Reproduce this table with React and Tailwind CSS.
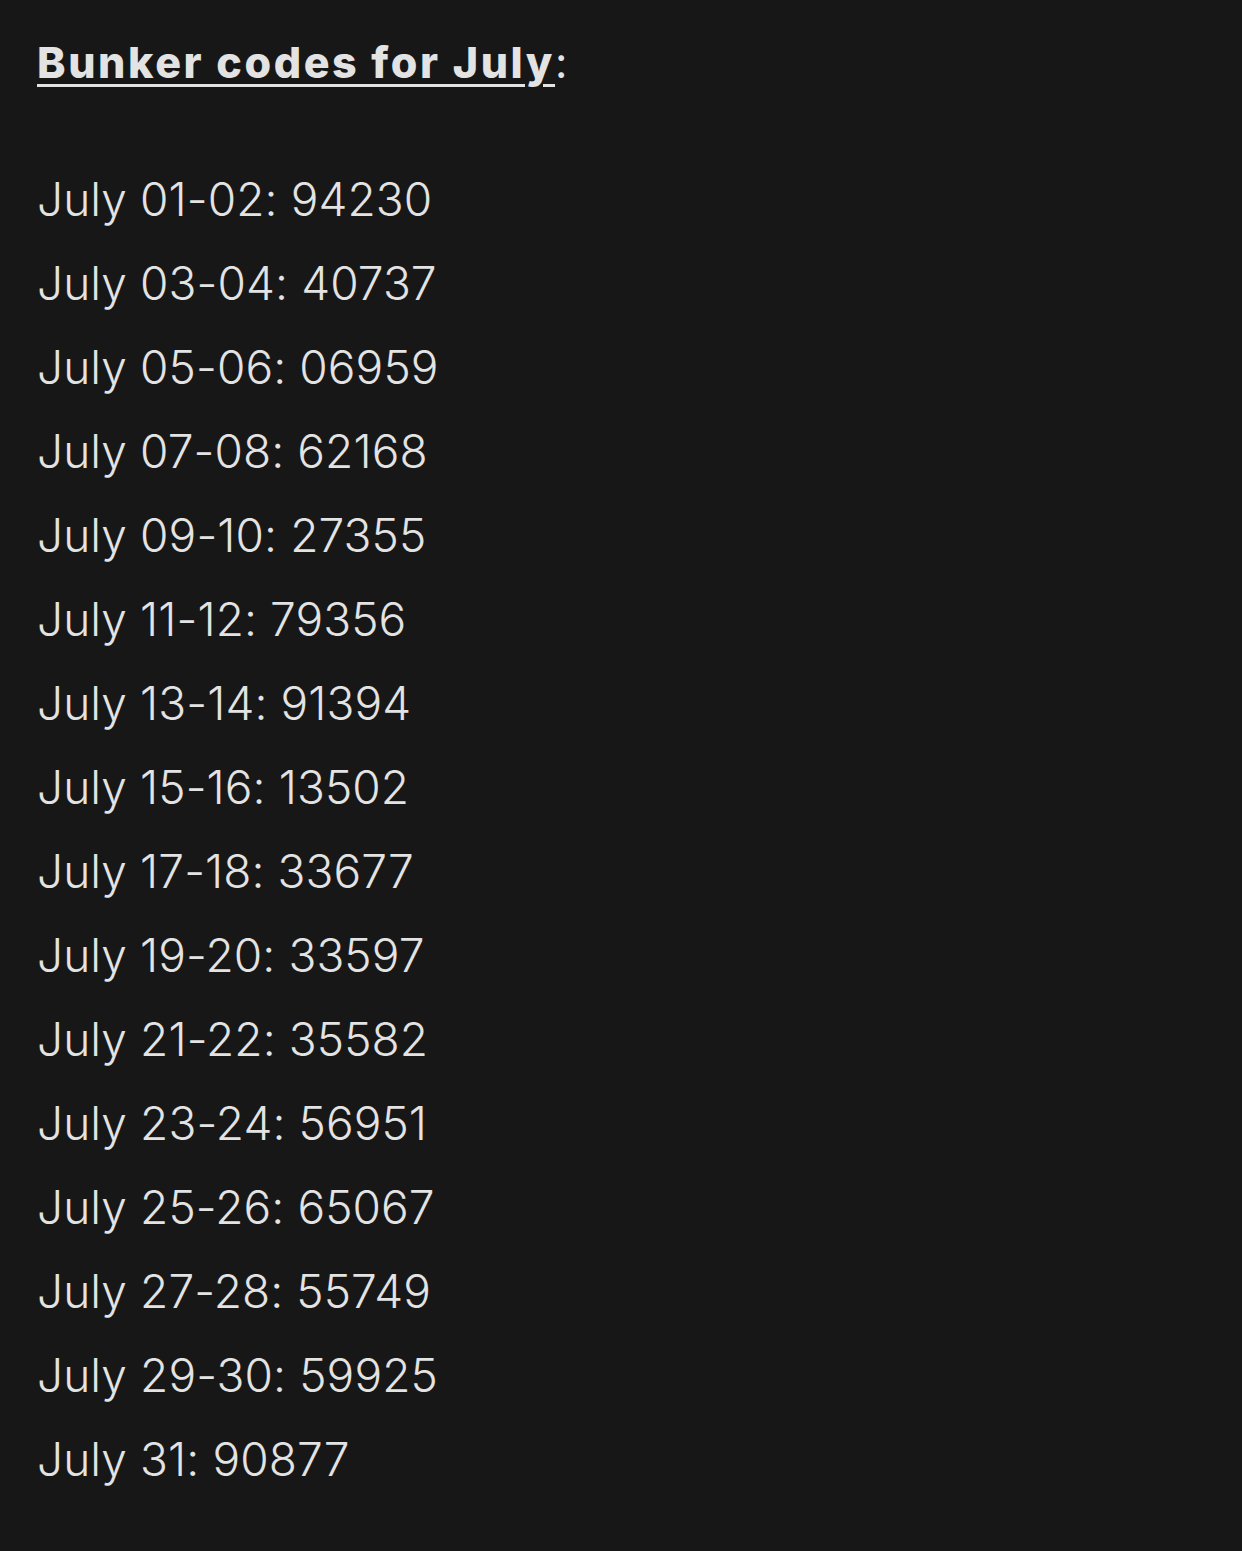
import React from "react";

const codes = [
  ["01-02", "94230"],
  ["03-04", "40737"],
  ["05-06", "06959"],
  ["07-08", "62168"],
  ["09-10", "27355"],
  ["11-12", "79356"],
  ["13-14", "91394"],
  ["15-16", "13502"],
  ["17-18", "33677"],
  ["19-20", "33597"],
  ["21-22", "35582"],
  ["23-24", "56951"],
  ["25-26", "65067"],
  ["27-28", "55749"],
  ["29-30", "59925"],
  ["31", "90877"],
];

export default function App() {
  return (
    <div
      className="min-h-[1551px] w-full bg-[#171717] text-[#e3e3e3] pl-[37px] pt-[30px]"
      style={{ fontFamily: "Inter, 'Noto Sans', sans-serif" }}
    >
      <p className="text-[43px] leading-[64px] font-extrabold tracking-[2.6px]">
        <span className="underline decoration-[3px] underline-offset-[6px]">Bunker codes for July</span>
        <span className="font-normal">:</span>
      </p>
      <div className="mt-[63px] flex flex-col">
        {codes.map(([d, c]) => (
          <p key={d} className="text-[46px] leading-[84px] font-light tracking-[0.1px]">
            July {d}: {c}
          </p>
        ))}
      </div>
    </div>
  );
}
